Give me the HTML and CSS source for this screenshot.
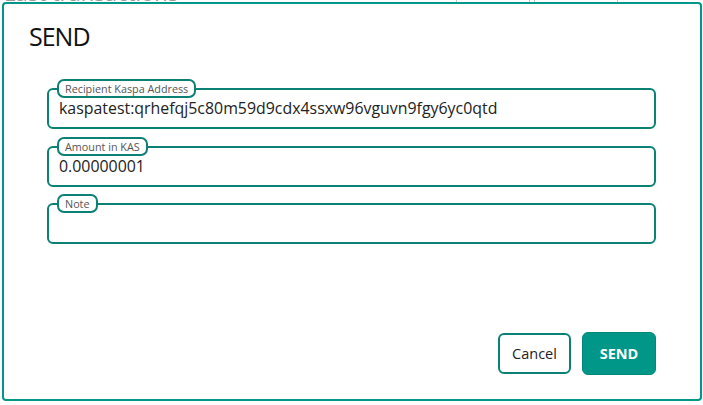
FILE: index.html
```html
<!DOCTYPE html>
<html>
<head>
<meta charset="utf-8">
<link rel="stylesheet" href="styles.css">
</head>
<body>
<div class="page">
  <div class="page-head">
    <div class="page-title">Last transactions</div>
    <div class="cols">
      <div class="col c1"></div>
      <div class="col c2"></div>
    </div>
  </div>
</div>
<div class="dialog">
  <h2 class="dialog-title">SEND</h2>
  <div class="fields">
    <div class="field">
      <span class="field-label">Recipient Kaspa Address</span>
      <div class="field-value">kaspatest:qrhefqj5c80m59d9cdx4ssxw96vguvn9fgy6yc0qtd</div>
    </div>
    <div class="field">
      <span class="field-label">Amount in KAS</span>
      <div class="field-value">0.00000001</div>
    </div>
    <div class="field">
      <span class="field-label">Note</span>
      <div class="field-value"></div>
    </div>
  </div>
  <div class="actions">
    <button class="btn btn-cancel">Cancel</button>
    <button class="btn btn-send">SEND</button>
  </div>
</div>
</body>
</html>
```
FILE: styles.css
```css
* { box-sizing: border-box; }
html, body { margin: 0; padding: 0; background: #fff; }
body { font-family: "Open Sans", "Noto Sans", sans-serif; width: 703px; height: 405px; overflow: hidden; }

.page { height: 405px; }
.page-head { display: flex; align-items: flex-start; margin-top: -21px; }
.page-title { font-size: 22px; line-height: 26px; color: #9a9a9a; padding-left: 4px; width: 456px; }
.cols { display: flex; margin-top: 17px; }
.col { height: 8px; border-left: 1px solid #a9d2cd; border-right: 1px solid #a9d2cd; }
.c1 { width: 74px; }
.c2 { width: 84px; margin-left: 4px; }

.dialog {
  position: absolute;
  left: 2px; top: 2px;
  width: 700px; height: 399px;
  border: 2px solid #009688;
  border-radius: 4px;
  background: #fff;
  display: flex;
  flex-direction: column;
  padding: 17px 0 24px 0;
}
.dialog-title {
  margin: 0 0 0 25px;
  font-size: 25px;
  line-height: 30px;
  font-weight: 400;
  color: #111;
  letter-spacing: -1px;
}

.fields {
  margin: 37px 0 0 43px;
  width: 609px;
  display: flex;
  flex-direction: column;
  gap: 16.5px;
}
.field {
  position: relative;
  height: 41px;
  border: 2px solid #0b8074;
  border-radius: 6px;
}
.field-label {
  position: absolute;
  left: 8px;
  top: -11px;
  height: 19px;
  padding: 0 6px;
  border: 2px solid #0b8074;
  border-radius: 7px;
  background: #fff;
  font-size: 10.8px;
  line-height: 15px;
  color: #555;
}
.field-value {
  padding-left: 10px;
  font-size: 15.9px;
  line-height: 37px;
  color: #222;
  white-space: nowrap;
}

.actions {
  margin-top: auto;
  margin-left: 43px;
  width: 609px;
  display: flex;
  justify-content: flex-end;
  align-items: center;
  gap: 11px;
}
.btn {
  font-family: "Open Sans", "Noto Sans", sans-serif;
  font-size: 14.5px;
  border-radius: 6px;
  cursor: pointer;
}
.btn-cancel {
  width: 73px;
  height: 41px;
  background: #fff;
  border: 2px solid #0b8074;
  color: #222;
}
.btn-send {
  width: 74px;
  height: 43px;
  background: #009688;
  border: 1px solid #00897b;
  color: #fff;
  font-weight: 700;
}
```
